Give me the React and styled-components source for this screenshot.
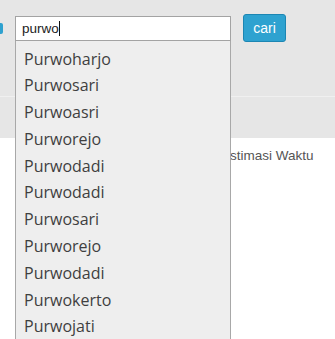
import React from "react";
import styled, { createGlobalStyle } from "styled-components";

const Global = createGlobalStyle`
  html, body { margin: 0; padding: 0; background: #ffffff; overflow: hidden; }
  body { font-family: "Liberation Sans", Arial, sans-serif; }
`;

const Page = styled.div`
  position: relative;
  width: 335px;
  height: 339px;
  overflow: hidden;
`;

const Header = styled.div`
  display: flex;
  align-items: flex-start;
  height: 96px;
  box-sizing: border-box;
  padding-top: 14px;
  background: #e6e6e6;
`;

const Row = styled.div`
  display: flex;
  align-items: center;
  height: 28px;
`;

const EdgeTab = styled.div`
  width: 3px;
  height: 11px;
  background: #2ea1cf;
  border-radius: 0 2px 2px 0;
  margin-right: 12px;
`;

const SearchField = styled.div`
  box-sizing: border-box;
  width: 216px;
  height: 25px;
  background: #ffffff;
  border: 1px solid #a3a3a3;
  padding: 0 6px;
  display: flex;
  align-items: center;
  font-family: "Liberation Sans", Arial, sans-serif;
  font-size: 13.5px;
  color: #222;
`;

const Caret = styled.span`
  display: inline-block;
  width: 1px;
  height: 15px;
  background: #111;
`;

const SearchButton = styled.button`
  box-sizing: border-box;
  margin-left: 12px;
  width: 43px;
  height: 28px;
  padding: 0;
  background: #2ea2d0;
  border: 1px solid #1c86b3;
  border-radius: 3px;
  color: #ffffff;
  font-family: "Liberation Sans", Arial, sans-serif;
  font-size: 14px;
  line-height: 26px;
  text-align: center;
`;

const NavBand = styled.div`
  height: 42px;
  background: #e6e6e6;
  border-top: 1px solid #f0f0f0;
  box-sizing: border-box;
`;

const Content = styled.div`
  padding: 10px 0 0 221px;
`;

const ColumnHead = styled.div`
  font-family: "Liberation Sans", Arial, sans-serif;
  font-size: 13.5px;
  color: #555555;
  white-space: nowrap;
`;

const Suggestions = styled.ul`
  position: absolute;
  top: 41px;
  left: 15px;
  width: 216px;
  box-sizing: border-box;
  margin: 0;
  padding: 4.5px 0 8px;
  list-style: none;
  background: #eeeeee;
  border: 1px solid #a8a8a8;
  border-top: none;
  border-radius: 0 0 3px 3px;
`;

const Suggestion = styled.li`
  height: 26.8px;
  line-height: 26.8px;
  padding-left: 8px;
  font-family: "Open Sans", "Noto Sans", sans-serif;
  font-size: 16px;
  color: #3f3f3f;
  white-space: nowrap;
`;

const items = [
  "Purwoharjo",
  "Purwosari",
  "Purwoasri",
  "Purworejo",
  "Purwodadi",
  "Purwodadi",
  "Purwosari",
  "Purworejo",
  "Purwodadi",
  "Purwokerto",
  "Purwojati",
];

export default function App() {
  return (
    <Page>
      <Global />
      <Header>
        <Row>
          <EdgeTab />
          <SearchField>
            purwo
            <Caret />
          </SearchField>
          <SearchButton>cari</SearchButton>
        </Row>
      </Header>
      <NavBand />
      <Content>
        <ColumnHead>Estimasi Waktu</ColumnHead>
      </Content>
      <Suggestions>
        {items.map((t, i) => (
          <Suggestion key={i}>{t}</Suggestion>
        ))}
      </Suggestions>
    </Page>
  );
}
